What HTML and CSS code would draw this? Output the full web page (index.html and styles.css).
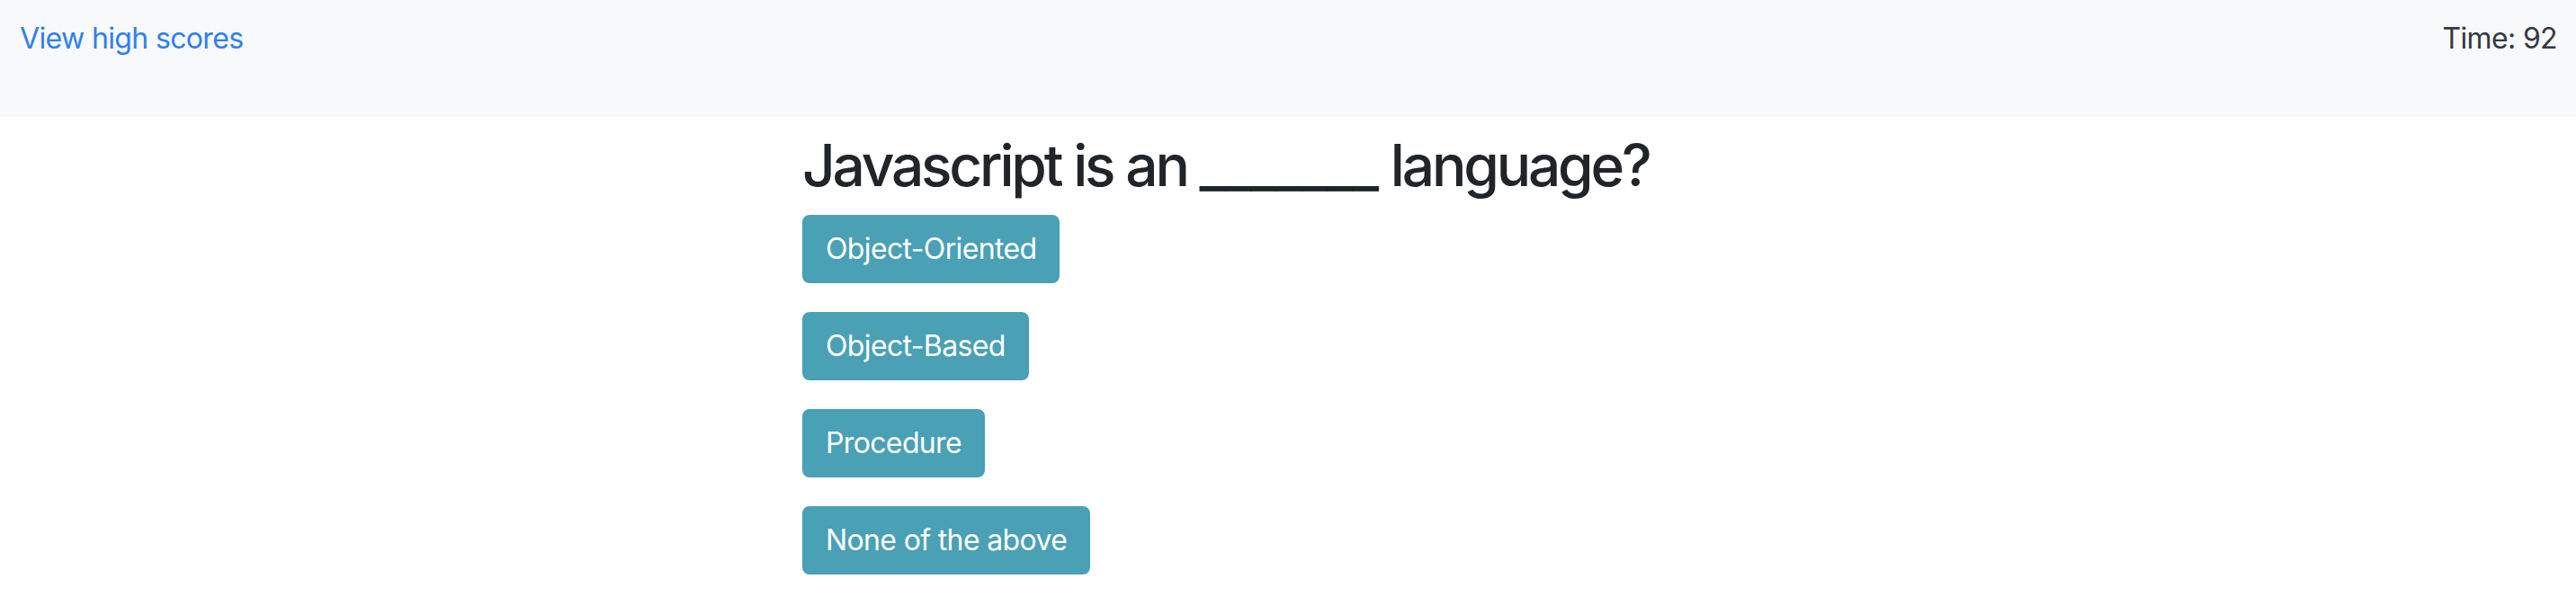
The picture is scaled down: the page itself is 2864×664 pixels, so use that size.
FILE: index.html
```html
<!DOCTYPE html>
<html lang="en">
<head>
<meta charset="utf-8">
<title>Code Quiz</title>
<link rel="stylesheet" href="styles.css">
</head>
<body>
<header class="topbar">
  <a class="scores-link" href="#">View high scores</a>
  <span class="timer">Time: 92</span>
</header>
<main class="container">
  <div class="quiz-col">
    <h2 class="question">Javascript is an <span class="blank">_______</span> language?</h2>
    <div class="choices">
      <button class="choice">Object-Oriented</button>
      <button class="choice">Object-Based</button>
      <button class="choice">Procedure</button>
      <button class="choice">None of the above</button>
    </div>
  </div>
</main>
</body>
</html>
```
FILE: styles.css
```css
* { box-sizing: border-box; }
html, body { margin: 0; padding: 0; }
body {
  font-family: Inter, "Noto Sans", "Liberation Sans", sans-serif;
  font-size: 32px;
  line-height: 1.5;
  letter-spacing: -0.02em;
  color: #212529;
  background: #fff;
}
.topbar {
  height: 130px;
  background: #f8f9fa;
  display: flex;
  justify-content: space-between;
  align-items: flex-start;
  padding: 19px 21px 0 22px;
}
.scores-link {
  color: #2f80f0;
  text-decoration: none;
}
.timer {
  color: #343a40;
}
.container {
  max-width: 2280px;
  margin: 0 auto;
  padding-top: 16px;
}
.quiz-col {
  margin-left: 25%;
  padding: 0 30px;
}
.question {
  margin: 0 0 16px;
  font-size: 64px;
  font-weight: 500;
  line-height: 1.2;
  letter-spacing: -0.05em;
  color: #212529;
}
.blank {
  letter-spacing: -0.02em;
}
.choices {
  display: flex;
  flex-direction: column;
  align-items: flex-start;
  gap: 32px;
}
.choice {
  font-family: inherit;
  font-size: 32px;
  line-height: 1.5;
  letter-spacing: -0.02em;
  color: #fff;
  background: #4aa0b5;
  border: 2px solid #4aa0b5;
  border-radius: 8px;
  padding: 12px 24px;
  cursor: pointer;
}
```
